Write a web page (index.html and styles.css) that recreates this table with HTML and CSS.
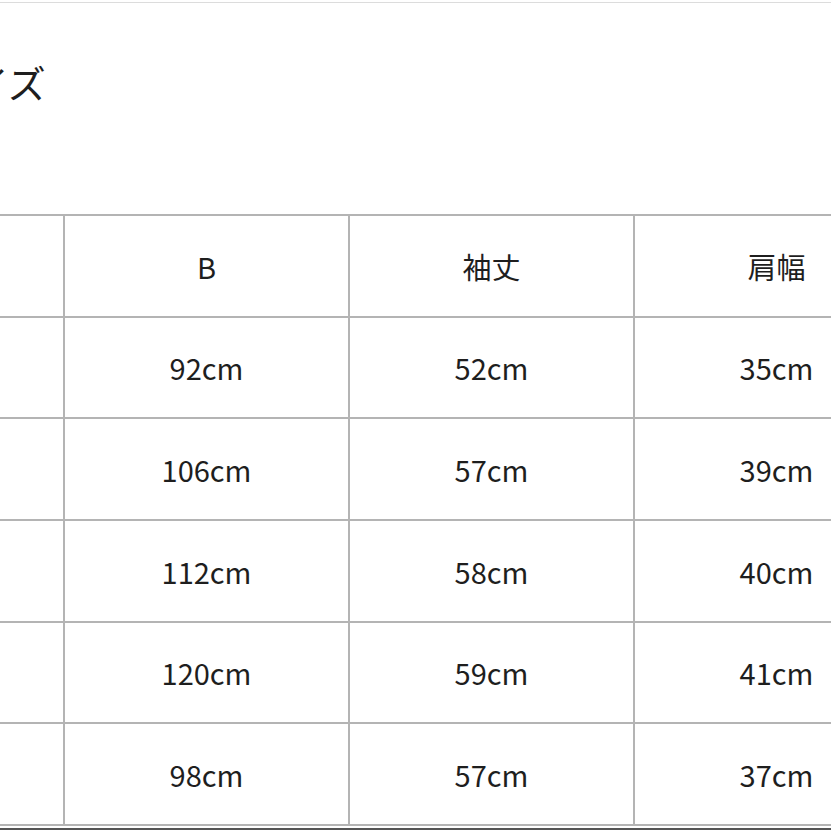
FILE: index.html
```html
<!DOCTYPE html>
<html lang="ja">
<head>
<meta charset="utf-8">
<link rel="stylesheet" href="styles.css">
</head>
<body>
<div class="page">
  <div class="topline"></div>
  <h2 class="title">サイズ</h2>
  <table class="size-table">
    <tr><td></td><td>B</td><td>袖丈</td><td>肩幅</td></tr>
    <tr><td></td><td>92cm</td><td>52cm</td><td>35cm</td></tr>
    <tr><td></td><td>106cm</td><td>57cm</td><td>39cm</td></tr>
    <tr><td></td><td>112cm</td><td>58cm</td><td>40cm</td></tr>
    <tr><td></td><td>120cm</td><td>59cm</td><td>41cm</td></tr>
    <tr><td></td><td>98cm</td><td>57cm</td><td>37cm</td></tr>
  </table>
  <div class="next"></div>
</div>
</body>
</html>
```
FILE: styles.css
```css
html, body {
  margin: 0;
  padding: 0;
  background: #fff;
  overflow: hidden;
}
.page {
  width: 831px;
  height: 831px;
  overflow: hidden;
  font-family: "Noto Sans CJK JP", "Noto Sans", sans-serif;
  color: #222;
}
.topline {
  margin-top: 2px;
  height: 1px;
  background: #dcdcdc;
}
.title {
  margin: 0 0 0 -67px;
  padding-top: 51px;
  height: 211px;
  box-sizing: border-box;
  font-size: 38px;
  font-weight: 400;
  line-height: 56px;
  color: #1e1e1e;
}
.size-table {
  margin-left: -222px;
  border-collapse: collapse;
  table-layout: fixed;
  width: 1142px;
}
.size-table td {
  width: 285px;
  height: 101.67px;
  border: 2px solid #b4b4b4;
  text-align: center;
  vertical-align: middle;
  font-size: 29px;
  padding: 0;
  box-sizing: border-box;
  color: #1e1e1e;
}
.next {
  margin-top: 2px;
  margin-left: -222px;
  width: 1142px;
  border-top: 2px solid #555;
}
```
